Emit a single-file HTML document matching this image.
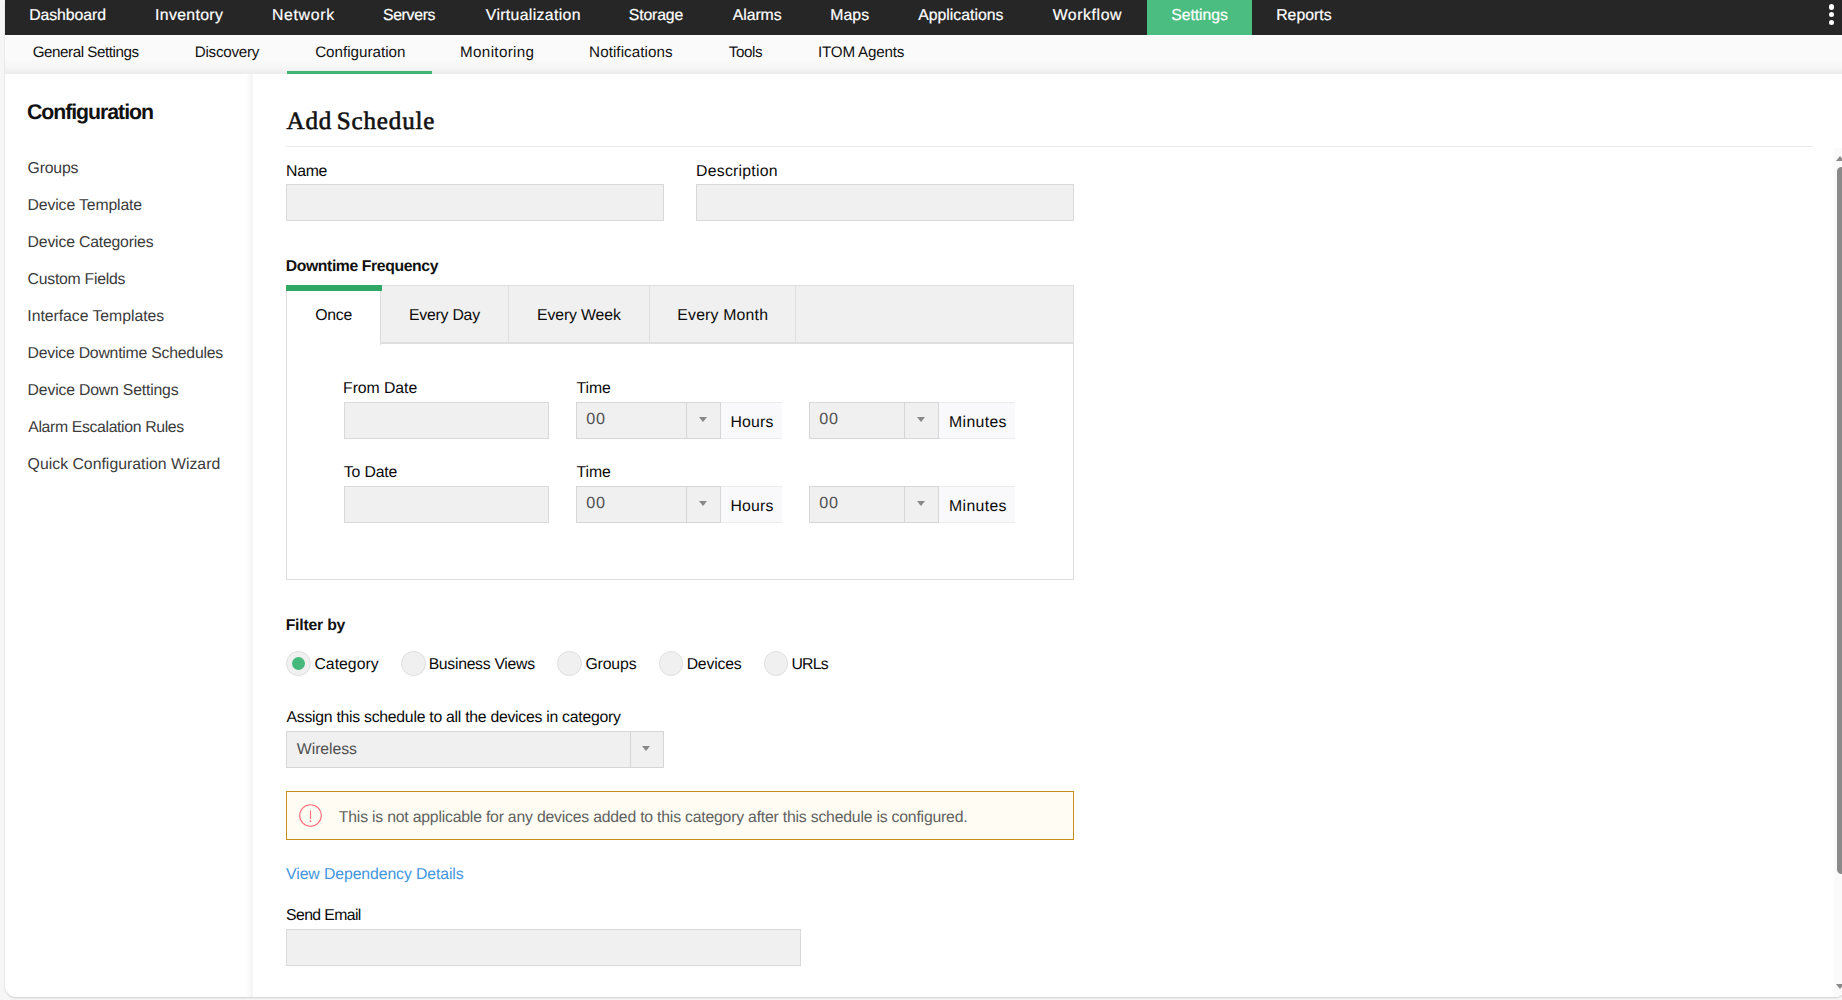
<!DOCTYPE html>
<html lang="en">
<head>
<meta charset="utf-8">
<title>Add Schedule - Configuration</title>
<style>
html,body{margin:0;padding:0;}
body{width:1842px;height:1000px;overflow:hidden;background:#f6f6f6;position:relative;font-family:"Liberation Sans",sans-serif;}
.abs,.t,.box,.inp{position:absolute;}
h1,h2{margin:0;font-weight:400;}
a{text-decoration:none;}
.t{white-space:nowrap;line-height:1;font-family:"Liberation Sans",sans-serif;text-rendering:geometricPrecision;}
.f2{font-family:"Liberation Serif",serif;}
.wrap{position:absolute;left:5px;top:0;width:1840.5px;height:997px;background:#fff;border-radius:0 0 11px 11px;box-shadow:0 1px 2px rgba(0,0,0,.17);overflow:hidden;}
.nav{position:absolute;left:5px;top:0;width:1837px;height:35px;background:#262626;}
.nav .active{position:absolute;left:1142px;top:0;width:105px;height:35px;background:#4bbd80;}
.dot{position:absolute;left:1829px;width:5.4px;height:5.4px;border-radius:50%;background:#fff;}
.subnav{position:absolute;left:5px;top:36px;width:1837px;height:38px;background:linear-gradient(#fafafa 0,#fafafa 24px,#f6f6f6 31px,#ececec 38px);}
.subnav .ul{position:absolute;left:282px;top:35px;width:145px;height:3px;background:#3fb574;}
.sideshadow{position:absolute;left:245px;top:74px;width:8px;height:923px;background:linear-gradient(90deg,rgba(0,0,0,0),rgba(0,0,0,.045));}
.hr{position:absolute;left:286px;top:146px;width:1527px;height:1px;background:#ececec;}
.inp{background:#f0f0f0;border:1px solid #d9d9d9;box-sizing:border-box;}
.panel{position:absolute;left:286px;top:285px;width:788px;height:295px;box-sizing:border-box;border:1px solid #dedede;background:#fff;}
.tabbar{position:absolute;left:286px;top:285px;width:788px;height:59px;box-sizing:border-box;background:#f0f0f0;border:1px solid #dedede;border-bottom:2px solid #dfdfdf;}
.tabon{position:absolute;left:286px;top:285px;width:95px;height:60px;box-sizing:border-box;background:#fff;border-left:1px solid #dcdcdc;border-right:1px solid #dcdcdc;}
.tabgreen{position:absolute;left:286px;top:285px;width:96px;height:6px;background:#2fa866;}
.vdiv{position:absolute;top:286px;width:1px;height:56px;background:#dedede;}
.sel{position:absolute;box-sizing:border-box;background:#f0f0f0;border:1px solid #d6d6d6;height:37px;}
.sel i{position:absolute;top:0;bottom:0;width:1px;background:#d6d6d6;}
.sel b{position:absolute;width:0;height:0;border-left:4px solid transparent;border-right:4px solid transparent;border-top:5px solid #888;}
.addon{position:absolute;height:37px;box-sizing:border-box;background:#f9f9fb;border-top:1px solid #ececec;border-bottom:1px solid #ececec;}
.radio{position:absolute;width:24.6px;height:24.6px;box-sizing:border-box;border-radius:50%;background:#f0f0f0;border:1px solid #dfdfdf;top:651.1px;}
.radio.on::after{content:"";position:absolute;left:4.7px;top:4.7px;width:13.2px;height:13.2px;border-radius:50%;background:#45b97c;}
.alert{position:absolute;left:286px;top:791px;width:788px;height:49px;box-sizing:border-box;border:1px solid #c58e1f;background:#fffdf3;}
.sbtrack{position:absolute;left:1834px;top:148px;width:15px;height:849px;background:#fafafa;}
.sbthumb{position:absolute;left:1837px;top:167px;width:9px;height:707px;border-radius:5px;background:#8a8a8a;}
.arr{position:absolute;width:0;height:0;border-left:4.6px solid transparent;border-right:4.6px solid transparent;}
</style>
</head>
<body>
<div class="wrap"><div class="sbtrack" style="left:1829px"></div></div>
<div class="nav"><div class="active"></div></div>
<div class="dot" style="top:4.3px"></div><div class="dot" style="top:11.9px"></div><div class="dot" style="top:19.7px"></div>
<div class="subnav"><div class="ul"></div></div>
<div class="sideshadow"></div>
<div class="hr"></div>

<div class="inp" style="left:286px;top:184px;width:378px;height:37px"></div>
<div class="inp" style="left:696px;top:184px;width:378px;height:37px"></div>

<div class="panel"></div>
<div class="tabbar"></div>
<div class="vdiv" style="left:508px"></div><div class="vdiv" style="left:649px"></div><div class="vdiv" style="left:795px"></div>
<div class="tabon"></div>
<div class="tabgreen"></div>

<div class="inp" style="left:344px;top:402px;width:205px;height:37px"></div>
<div class="inp" style="left:344px;top:486px;width:205px;height:37px"></div>

<div class="sel" style="left:576px;top:402px;width:145px"><i style="left:109px"></i><b style="left:122px;top:14.3px"></b></div>
<div class="addon" style="left:721px;top:402px;width:61px"></div>
<div class="sel" style="left:809px;top:402px;width:130px"><i style="left:94px"></i><b style="left:107px;top:14.3px"></b></div>
<div class="addon" style="left:939px;top:402px;width:76px"></div>

<div class="sel" style="left:576px;top:486px;width:145px"><i style="left:109px"></i><b style="left:122px;top:14.3px"></b></div>
<div class="addon" style="left:721px;top:486px;width:61px"></div>
<div class="sel" style="left:809px;top:486px;width:130px"><i style="left:94px"></i><b style="left:107px;top:14.3px"></b></div>
<div class="addon" style="left:939px;top:486px;width:76px"></div>

<div class="radio on" style="left:286.2px"></div>
<div class="radio" style="left:401.2px"></div>
<div class="radio" style="left:557.1px"></div>
<div class="radio" style="left:658.6px"></div>
<div class="radio" style="left:763.8px"></div>

<div class="sel" style="left:286px;top:731px;width:378px"><i style="left:343px"></i><b style="left:355px;top:14.3px"></b></div>

<div class="alert">
<svg style="position:absolute;left:11px;top:11px" width="26" height="26" viewBox="0 0 26 26"><circle cx="12.5" cy="12.5" r="10.8" fill="none" stroke="#fc6f7e" stroke-width="1.15"/><path d="M12.5 7.4V16" stroke="#fc6f7e" stroke-width="1.15" fill="none"/><circle cx="12.5" cy="18.2" r="0.9" fill="#fb6b7b"/></svg>
</div>

<div class="inp" style="left:286px;top:929px;width:515px;height:37px"></div>

<div class="sbthumb"></div>
<div class="arr" style="left:1836px;top:155.5px;border-bottom:5.3px solid #8a8a8a"></div>
<div class="arr" style="left:1836px;top:984px;border-top:5.3px solid #8a8a8a"></div>

<nav aria-label="Main">
<a class="t" style="left:29.17px;top:8.30px;font-size:15.8px;letter-spacing:-0.050px;color:#fff;-webkit-text-stroke:0.2px #fff;">Dashboard</a>
<a class="t" style="left:155.07px;top:8.30px;font-size:15.8px;letter-spacing:0.344px;color:#fff;-webkit-text-stroke:0.2px #fff;">Inventory</a>
<a class="t" style="left:271.90px;top:8.30px;font-size:15.8px;letter-spacing:0.707px;color:#fff;-webkit-text-stroke:0.2px #fff;">Network</a>
<a class="t" style="left:382.90px;top:8.30px;font-size:15.8px;letter-spacing:-0.299px;color:#fff;-webkit-text-stroke:0.2px #fff;">Servers</a>
<a class="t" style="left:485.81px;top:8.30px;font-size:15.8px;letter-spacing:0.347px;color:#fff;-webkit-text-stroke:0.2px #fff;">Virtualization</a>
<a class="t" style="left:628.81px;top:8.30px;font-size:15.8px;letter-spacing:-0.138px;color:#fff;-webkit-text-stroke:0.2px #fff;">Storage</a>
<a class="t" style="left:732.80px;top:8.30px;font-size:15.8px;letter-spacing:-0.072px;color:#fff;-webkit-text-stroke:0.2px #fff;">Alarms</a>
<a class="t" style="left:830.17px;top:8.30px;font-size:15.8px;letter-spacing:0.120px;color:#fff;-webkit-text-stroke:0.2px #fff;">Maps</a>
<a class="t" style="left:918.30px;top:8.30px;font-size:15.8px;letter-spacing:-0.010px;color:#fff;-webkit-text-stroke:0.2px #fff;">Applications</a>
<a class="t" style="left:1052.63px;top:8.30px;font-size:15.8px;letter-spacing:0.598px;color:#fff;-webkit-text-stroke:0.2px #fff;">Workflow</a>
<a class="t" style="left:1171.17px;top:8.30px;font-size:15.8px;letter-spacing:-0.048px;color:#fff;-webkit-text-stroke:0.2px #fff;">Settings</a>
<a class="t" style="left:1276.17px;top:8.30px;font-size:15.8px;letter-spacing:0.031px;color:#fff;-webkit-text-stroke:0.2px #fff;">Reports</a>
</nav>
<nav aria-label="Settings">
<a class="t" style="left:32.65px;top:45.30px;font-size:15.2px;letter-spacing:-0.443px;color:#111;">General Settings</a>
<a class="t" style="left:194.80px;top:45.30px;font-size:15.2px;letter-spacing:-0.272px;color:#111;">Discovery</a>
<a class="t" style="left:315.15px;top:45.30px;font-size:15.2px;letter-spacing:-0.008px;color:#111;">Configuration</a>
<a class="t" style="left:460.10px;top:45.30px;font-size:15.2px;letter-spacing:0.339px;color:#111;">Monitoring</a>
<a class="t" style="left:589.10px;top:45.30px;font-size:15.2px;letter-spacing:0.064px;color:#111;">Notifications</a>
<a class="t" style="left:728.70px;top:45.30px;font-size:15.2px;letter-spacing:-0.367px;color:#111;">Tools</a>
<a class="t" style="left:817.95px;top:45.30px;font-size:15.2px;letter-spacing:-0.184px;color:#111;">ITOM Agents</a>
</nav>
<aside>
<h2 class="t" style="left:26.90px;top:102.30px;font-size:21.3px;letter-spacing:-1.039px;color:#111;font-weight:700;">Configuration</h2>
<a class="t" style="left:27.60px;top:161.30px;font-size:15.8px;letter-spacing:-0.191px;color:#3b3b3b;">Groups</a>
<a class="t" style="left:27.60px;top:198.30px;font-size:15.8px;letter-spacing:-0.143px;color:#3b3b3b;">Device Template</a>
<a class="t" style="left:27.60px;top:235.30px;font-size:15.8px;letter-spacing:-0.192px;color:#3b3b3b;">Device Categories</a>
<a class="t" style="left:27.60px;top:272.30px;font-size:15.8px;letter-spacing:-0.269px;color:#3b3b3b;">Custom Fields</a>
<a class="t" style="left:27.29px;top:309.30px;font-size:15.8px;letter-spacing:-0.040px;color:#3b3b3b;">Interface Templates</a>
<a class="t" style="left:27.60px;top:346.30px;font-size:15.8px;letter-spacing:-0.228px;color:#3b3b3b;">Device Downtime Schedules</a>
<a class="t" style="left:27.60px;top:383.30px;font-size:15.8px;letter-spacing:-0.186px;color:#3b3b3b;">Device Down Settings</a>
<a class="t" style="left:28.29px;top:420.30px;font-size:15.8px;letter-spacing:-0.355px;color:#3b3b3b;">Alarm Escalation Rules</a>
<a class="t" style="left:27.60px;top:457.30px;font-size:15.8px;letter-spacing:0.013px;color:#3b3b3b;">Quick Configuration Wizard</a>
</aside>
<main>
<h1 class="t f2" style="left:286.52px;top:109.30px;font-size:25px;letter-spacing:0.864px;color:#111;word-spacing:-2.5px;-webkit-text-stroke:0.6px #111;">Add Schedule</h1>
<span class="t" style="left:286.05px;top:164.30px;font-size:15.8px;letter-spacing:-0.280px;color:#0a0a0a;">Name</span>
<span class="t" style="left:696.05px;top:164.30px;font-size:15.8px;letter-spacing:0.254px;color:#0a0a0a;">Description</span>
<span class="t" style="left:285.70px;top:259.30px;font-size:15.8px;letter-spacing:-0.413px;color:#111;font-weight:700;">Downtime Frequency</span>
<span class="t" style="left:315.15px;top:308.30px;font-size:15.8px;letter-spacing:-0.172px;color:#0a0a0a;">Once</span>
<span class="t" style="left:409.05px;top:308.30px;font-size:15.8px;letter-spacing:-0.234px;color:#0a0a0a;">Every Day</span>
<span class="t" style="left:537.05px;top:308.30px;font-size:15.8px;letter-spacing:-0.125px;color:#0a0a0a;">Every Week</span>
<span class="t" style="left:677.30px;top:308.30px;font-size:15.8px;letter-spacing:0.198px;color:#0a0a0a;">Every Month</span>
<span class="t" style="left:343.05px;top:381.30px;font-size:15.8px;letter-spacing:-0.057px;color:#0a0a0a;">From Date</span>
<span class="t" style="left:576.40px;top:381.30px;font-size:15.8px;letter-spacing:-0.010px;color:#0a0a0a;">Time</span>
<span class="t" style="left:343.68px;top:465.30px;font-size:15.8px;letter-spacing:-0.117px;color:#0a0a0a;">To Date</span>
<span class="t" style="left:576.40px;top:465.30px;font-size:15.8px;letter-spacing:-0.010px;color:#0a0a0a;">Time</span>
<span class="t" style="left:586.31px;top:411.30px;font-size:16.2px;letter-spacing:0.689px;color:#505050;">00</span>
<span class="t" style="left:819.31px;top:411.30px;font-size:16.2px;letter-spacing:0.689px;color:#505050;">00</span>
<span class="t" style="left:586.31px;top:495.30px;font-size:16.2px;letter-spacing:0.689px;color:#505050;">00</span>
<span class="t" style="left:819.31px;top:495.30px;font-size:16.2px;letter-spacing:0.689px;color:#505050;">00</span>
<span class="t" style="left:730.45px;top:415.30px;font-size:15.8px;letter-spacing:0.215px;color:#0a0a0a;">Hours</span>
<span class="t" style="left:949.05px;top:415.30px;font-size:15.8px;letter-spacing:0.348px;color:#0a0a0a;">Minutes</span>
<span class="t" style="left:730.45px;top:499.30px;font-size:15.8px;letter-spacing:0.215px;color:#0a0a0a;">Hours</span>
<span class="t" style="left:949.05px;top:499.30px;font-size:15.8px;letter-spacing:0.348px;color:#0a0a0a;">Minutes</span>
<span class="t" style="left:285.70px;top:618.30px;font-size:15.8px;letter-spacing:-0.219px;color:#111;font-weight:700;">Filter by</span>
<span class="t" style="left:314.40px;top:657.30px;font-size:15.8px;letter-spacing:0.027px;color:#0a0a0a;">Category</span>
<span class="t" style="left:428.63px;top:657.30px;font-size:15.8px;letter-spacing:-0.302px;color:#0a0a0a;">Business Views</span>
<span class="t" style="left:585.40px;top:657.30px;font-size:15.8px;letter-spacing:-0.122px;color:#0a0a0a;">Groups</span>
<span class="t" style="left:686.63px;top:657.30px;font-size:15.8px;letter-spacing:-0.197px;color:#0a0a0a;">Devices</span>
<span class="t" style="left:791.48px;top:657.30px;font-size:15.8px;letter-spacing:-0.780px;color:#0a0a0a;">URLs</span>
<span class="t" style="left:286.51px;top:710.30px;font-size:15.8px;letter-spacing:-0.268px;color:#0a0a0a;">Assign this schedule to all the devices in category</span>
<span class="t" style="left:296.86px;top:742.30px;font-size:15.8px;letter-spacing:-0.065px;color:#505050;">Wireless</span>
<span class="t" style="left:338.86px;top:810.30px;font-size:15.8px;letter-spacing:-0.212px;color:#616161;">This is not applicable for any devices added to this category after this schedule is configured.</span>
<a class="t" style="left:286.10px;top:867.30px;font-size:15.8px;letter-spacing:-0.097px;color:#4296e0;">View Dependency Details</a>
<span class="t" style="left:286.10px;top:908.30px;font-size:15.8px;letter-spacing:-0.622px;color:#0a0a0a;">Send Email</span>
</main>
</body>
</html>
